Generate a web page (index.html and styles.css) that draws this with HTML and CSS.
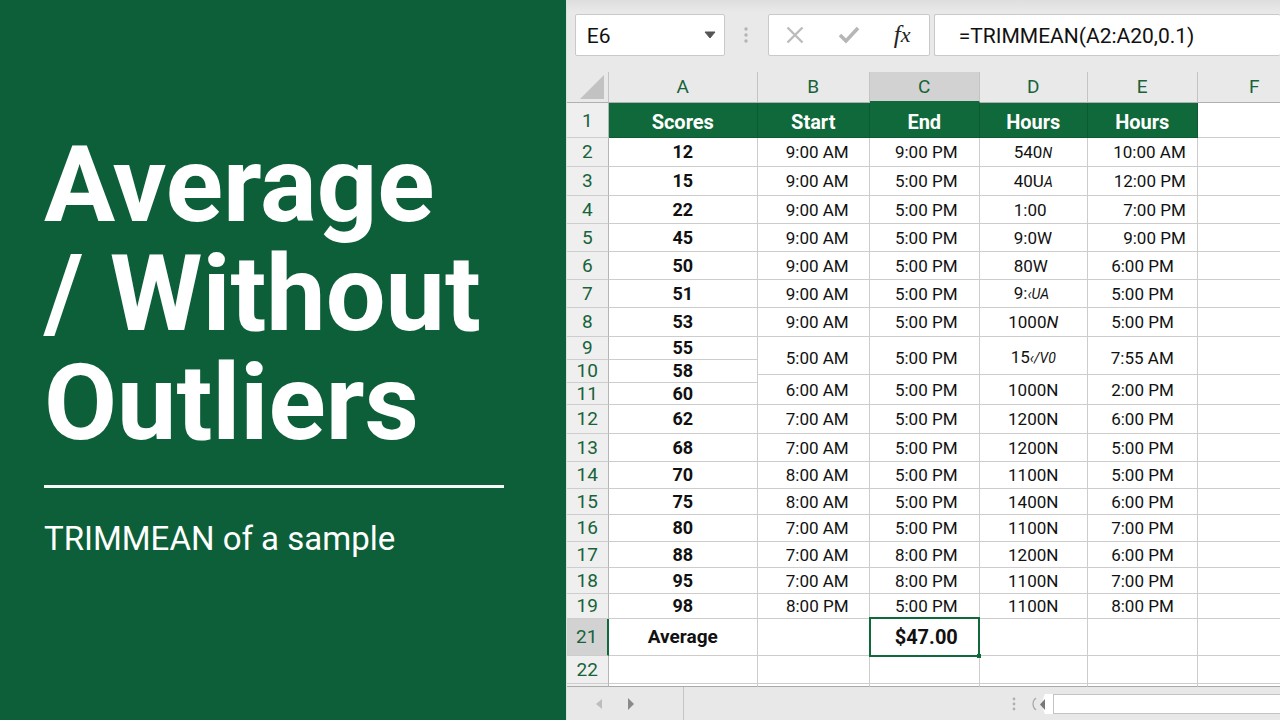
FILE: index.html
```html
<!DOCTYPE html>
<html lang="en">
<head>
<meta charset="utf-8">
<title>Average / Without Outliers</title>
<link rel="stylesheet" href="styles.css">
</head>
<body>
<main class="page">
  <section class="intro">
    <h1 class="title">Average<br>/ Without<br>Outliers</h1>
    <hr class="rule">
    <p class="subtitle">TRIMMEAN of a sample</p>
  </section>

  <section class="sheet" aria-label="Spreadsheet">
    <div class="bar">
      <div class="box name-box">
        <input class="name-input" type="text" value="E6" aria-label="Name box">
        <button class="icon-btn drop" type="button" aria-label="Open name list"><svg width="12" height="8" viewBox="0 0 12 8"><path d="M1 1h10L6 7z" fill="#555" stroke="#555" stroke-linejoin="round"/></svg></button>
      </div>
      <svg class="dots" width="6" height="18" viewBox="0 0 6 18" fill="#b4b4b4"><circle cx="3" cy="3" r="1.7"/><circle cx="3" cy="9" r="1.7"/><circle cx="3" cy="15" r="1.7"/></svg>
      <div class="box tools">
        <button class="icon-btn" type="button" aria-label="Cancel"><svg width="20" height="20" viewBox="0 0 20 20" fill="none" stroke="#bcbcbc" stroke-width="2.4"><path d="M2.500 2.500L17.500 17.500M17.500 2.500L2.500 17.500"/></svg></button>
        <button class="icon-btn" type="button" aria-label="Enter"><svg width="22" height="20" viewBox="0 0 22 20" fill="none" stroke="#b6b6b6" stroke-width="3.600"><path d="M2 10l6 6L20 3"/></svg></button>
        <button class="icon-btn fx" type="button" aria-label="Insert function"><i>f</i><i class="fx-x">x</i></button>
      </div>
      <input class="box formula" type="text" value="=TRIMMEAN(A2:A20,0.1)" aria-label="Formula">
    </div>

    <div class="grid-wrap">
      <table class="grid">
        <colgroup><col class="c-num"><col class="c-a"><col class="c-b"><col class="c-c"><col class="c-d"><col class="c-e"><col class="c-f"></colgroup>
        <thead>
          <tr class="letters"><th class="corner"><svg width="26" height="26" viewBox="0 0 26 26"><path d="M25 1v24H1z" fill="#c2c2c2"/></svg></th><th>A</th><th>B</th><th class="active">C</th><th>D</th><th>E</th><th>F</th></tr>
        </thead>
        <tbody>
          <tr class="heads"><th>1</th><td>Scores</td><td>Start</td><td>End</td><td>Hours</td><td>Hours</td><td class="blank"></td></tr>
          <tr class="h29"><th>2</th><td>12</td><td>9:00 AM</td><td>9:00 PM</td><td class="left">540<i class="small">N</i></td><td class="wide">10:00 AM</td><td></td></tr>
          <tr class="h29"><th>3</th><td>15</td><td>9:00 AM</td><td>5:00 PM</td><td class="left">40U<i class="small">A</i></td><td class="wide">12:00 PM</td><td></td></tr>
          <tr class="h28"><th>4</th><td>22</td><td>9:00 AM</td><td>5:00 PM</td><td class="left">1:00</td><td class="wide">7:00 PM</td><td></td></tr>
          <tr class="h28"><th>5</th><td>45</td><td>9:00 AM</td><td>5:00 PM</td><td class="left">9:0W</td><td class="wide">9:00 PM</td><td></td></tr>
          <tr class="h28"><th>6</th><td>50</td><td>9:00 AM</td><td>5:00 PM</td><td class="left">80W</td><td>6:00 PM</td><td></td></tr>
          <tr class="h28"><th>7</th><td>51</td><td>9:00 AM</td><td>5:00 PM</td><td class="left">9:<i class="small">‹UA</i></td><td>5:00 PM</td><td></td></tr>
          <tr class="h29"><th>8</th><td>53</td><td>9:00 AM</td><td>5:00 PM</td><td>1000<i>N</i></td><td>5:00 PM</td><td></td></tr>
          <tr class="h23"><th>9</th><td>55</td><td class="low" rowspan="2">5:00 AM</td><td class="low" rowspan="2">5:00 PM</td><td class="low" rowspan="2">15<i class="small">‹/V0</i></td><td class="low" rowspan="2">7:55 AM</td><td rowspan="2"></td></tr>
          <tr class="h15"><th rowspan="2">10</th><td rowspan="2">58</td></tr>
          <tr class="h8"><td class="b" rowspan="2">6:00 AM</td><td class="c" rowspan="2">5:00 PM</td><td class="d" rowspan="2">1000N</td><td class="e" rowspan="2">2:00 PM</td><td class="d" rowspan="2"></td></tr>
          <tr class="h22"><th>11</th><td>60</td></tr>
          <tr class="h29"><th>12</th><td>62</td><td>7:00 AM</td><td>5:00 PM</td><td>1200N</td><td>6:00 PM</td><td></td></tr>
          <tr class="h28"><th>13</th><td>68</td><td>7:00 AM</td><td>5:00 PM</td><td>1200N</td><td>5:00 PM</td><td></td></tr>
          <tr class="h27"><th>14</th><td>70</td><td>8:00 AM</td><td>5:00 PM</td><td>1100N</td><td>5:00 PM</td><td></td></tr>
          <tr class="h26"><th>15</th><td>75</td><td>8:00 AM</td><td>5:00 PM</td><td>1400N</td><td>6:00 PM</td><td></td></tr>
          <tr class="h27"><th>16</th><td>80</td><td>7:00 AM</td><td>5:00 PM</td><td>1100N</td><td>7:00 PM</td><td></td></tr>
          <tr class="h26"><th>17</th><td>88</td><td>7:00 AM</td><td>8:00 PM</td><td>1200N</td><td>6:00 PM</td><td></td></tr>
          <tr class="h26"><th>18</th><td>95</td><td>7:00 AM</td><td>8:00 PM</td><td>1100N</td><td>7:00 PM</td><td></td></tr>
          <tr class="h25"><th>19</th><td>98</td><td>8:00 PM</td><td>5:00 PM</td><td>1100N</td><td>8:00 PM</td><td></td></tr>
          <tr class="total"><th class="active-row">21</th><td>Average</td><td></td><td class="selected">$47.00</td><td></td><td></td><td></td></tr>
          <tr class="h28"><th>22</th><td></td><td></td><td></td><td></td><td></td><td></td></tr>
          <tr class="sliver"><th></th><td></td><td></td><td></td><td></td><td></td><td></td></tr>
        </tbody>
      </table>
    </div>

    <footer class="foot">
      <div class="tabs">
        <button class="icon-btn" type="button" aria-label="Previous sheet"><svg width="8" height="12" viewBox="0 0 8 12"><path d="M7 1v10L1 6z" fill="#bdbdbd"/></svg></button>
        <button class="icon-btn" type="button" aria-label="Next sheet"><svg width="8" height="14" viewBox="0 0 8 14"><path d="M1 1v12l6-6z" fill="#8a8a8a"/></svg></button>
      </div>
      <div class="scroll">
        <svg width="6" height="16" viewBox="0 0 6 16" fill="#b0b0b0"><circle cx="3" cy="3" r="1.400"/><circle cx="3" cy="8" r="1.400"/><circle cx="3" cy="13" r="1.400"/></svg>
        <button class="icon-btn back" type="button" aria-label="Scroll left"><svg width="22" height="20" viewBox="0 0 22 20"><path d="M14 0h8v20h-8c-3-5-3-15 0-20z" fill="#fff"/><path d="M5 4C1 7 1 13 5 16" fill="none" stroke="#aaa" stroke-width="1.200"/><path d="M14 5v11l-5-5.500z" fill="#777"/></svg></button>
        <div class="track"></div>
      </div>
    </footer>
  </section>
</main>
</body>
</html>
```
FILE: styles.css
```css
* { box-sizing: border-box; }
body { margin: 0; font-family: Roboto, "Liberation Sans", sans-serif; color: #111; }
.page { display: flex; min-height: 100vh; background: #e9e9e9; overflow: hidden; }

.intro {
  flex: 0 0 44.2%;
  display: flex;
  flex-direction: column;
  justify-content: center;
  padding: 0 62px 28px 44px;
  background: #0c5f39;
  color: #fff;
}
.title { margin: 0; font-size: 106px; line-height: 109px; font-weight: 700; white-space: nowrap; }
.rule { width: 100%; height: 3px; margin: 27px 0 29px; border: 0; background: #f4faf6; }
.subtitle { margin: 0; font-size: 33px; line-height: 44px; white-space: nowrap; }

.sheet { flex: 1 1 0; min-width: 0; display: flex; flex-direction: column; border-left: 1px solid #d8e2dc; }
.bar { display: flex; align-items: center; padding: 14px 0 16px 8px; background: linear-gradient(#dedede, #e9e9e9 12px); }
.box { height: 42px; background: #fff; border: 1px solid #c9c9c9; border-radius: 2px; }
.icon-btn { display: flex; align-items: center; justify-content: center; padding: 0; border: 0; background: none; color: #222; }
.name-box { flex: 0 0 150px; min-width: 0; display: flex; align-items: center; }
.name-input { flex: 1; width: 0; min-width: 0; padding: 2px 0 0 11px; border: 0; background: none; font: 21px Roboto, sans-serif; color: #111; }
.drop { width: 28px; height: 40px; }
.dots { flex: none; margin: 0 19px 0 18px; }
.tools { flex: 0 0 162px; display: flex; align-items: center; }
.tools .icon-btn { flex: 1; height: 40px; }
.tools .fx { font: 25px "Liberation Serif", serif; }
.fx-x { font-size: 22px; }
.formula { flex: 1; min-width: 0; margin-left: 4px; padding: 2px 0 0 24px; border-right: 0; font: 21px Roboto, sans-serif; color: #111; }

.grid-wrap { overflow: hidden; }
.grid { width: 745px; table-layout: fixed; border-collapse: separate; border-spacing: 0; background: #fff; }
.c-num { width: 42px; }
.c-a { width: 149px; }
.c-b { width: 112px; }
.c-c { width: 110px; }
.c-d { width: 108px; }
.c-e { width: 110px; }
.c-f { width: 114px; }
.grid th, .grid td {
  padding: 0;
  border-right: 1px solid #cdcdcd;
  border-bottom: 1px solid #cdcdcd;
  font-size: 17px;
  line-height: 14px;
  text-align: center;
  vertical-align: middle;
  white-space: nowrap;
}
.grid th { background: #efefef; color: #17633a; font-size: 19px; font-weight: 400; border-right-color: #b4b4b4; }
.letters { height: 31px; }
.grid .letters th { background: #e9e9e9; border-right-color: #c4c4c4; border-bottom-color: #b0b0b0; }
.grid .letters .corner { text-align: right; vertical-align: bottom; padding: 0 3px 2px 0; }
.corner svg { display: block; margin-left: auto; }
.grid .letters .active { background: #d2d2d2; border-bottom: 2px solid #10693a; }
.heads { height: 35px; }
.grid .heads th { padding-top: 2px; }
.grid .heads td { background: #10693a; border-color: #0b5a30; color: #fff; font-weight: 700; }
.grid .heads .blank { background: #fff; border-color: #cdcdcd; }
.h29 { height: 29px; }
.h28 { height: 28px; }
.h27 { height: 27px; }
.h26 { height: 26px; }
.h25 { height: 25px; }
.h23 { height: 23px; }
.h22 { height: 22px; }
.h15 { height: 15px; }
.h8 { height: 8px; }
.grid td:nth-child(2) { font-weight: 700; font-size: 18px; }
.grid td:nth-child(3), .grid td.b { padding-left: 8px; }
.grid td:nth-child(4), .grid td.c { padding-left: 4px; }
.grid td:nth-child(6), .grid td.e { padding-right: 23px; text-align: right; }
.grid td.b, .grid td.c, .grid td.d, .grid td.e { font-weight: 400; font-size: 17px; }
.grid td.c, .grid td.d { padding-right: 0; }
.grid td.d { padding-left: 0; text-align: center; }
.grid td.e { padding-left: 0; }
.grid td.low { padding-top: 4px; }
.grid td.left { padding-left: 34px; text-align: left; }
.grid td.wide { padding-right: 11px; }
.grid .heads td:nth-child(n) { padding: 3px 0 0; text-align: center; font-size: 20px; }
.small { font-size: 14px; }
.total { height: 37px; }
.grid .total td:nth-child(n) { font-size: 20px; font-weight: 700; }
.grid .total td:nth-child(2) { font-size: 19px; }
.grid .active-row { background: #d2d2d2; border-right: 2px solid #10693a; }
.grid td.selected { position: relative; }
.selected::before { content: ""; position: absolute; inset: -2px -1px -2px -1px; border: 2px solid #10693a; }
.selected::after { content: ""; position: absolute; right: -2px; bottom: -3px; width: 4px; height: 4px; background: #10693a; }
.sliver { height: 3px; }
.grid .sliver th, .grid .sliver td { line-height: 0; border-bottom-color: #aaa; }

.foot { flex: 1; min-height: 33px; display: flex; align-items: center; background: #e8e8e8; }
.tabs { align-self: stretch; flex: 0 0 117px; display: flex; align-items: center; gap: 24px; padding-left: 28px; border-right: 1px solid #c4c4c4; }
.scroll { flex: 1; display: flex; align-items: center; padding-left: 327px; }
.back { margin-left: 14px; }
.track { flex: 1; height: 20px; background: #fff; border: 1px solid #c4c4c4; border-right: 0; }
```
